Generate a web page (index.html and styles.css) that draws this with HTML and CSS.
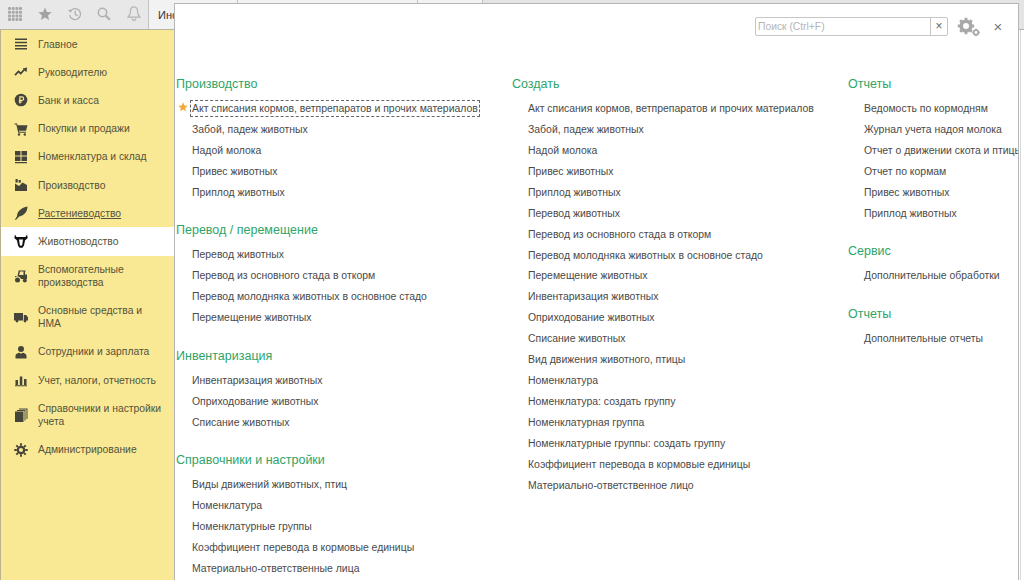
FILE: index.html
```html
<!DOCTYPE html>
<html lang="ru">
<head>
  <meta charset="UTF-8">
  <title>Животноводство</title>
  <link rel="stylesheet" href="styles.css">
</head>
<body>

<div class="topbar">
  <div class="tools">
    <svg class="tool" width="14" height="14" viewBox="0 0 14 14"><g fill="#a9a9a9"><rect x="0" y="0" width="3" height="3" rx="1"/><rect x="3.7" y="0" width="3" height="3" rx="1"/><rect x="7.4" y="0" width="3" height="3" rx="1"/><rect x="11" y="0" width="3" height="3" rx="1"/><rect x="0" y="3.7" width="3" height="3" rx="1"/><rect x="3.7" y="3.7" width="3" height="3" rx="1"/><rect x="7.4" y="3.7" width="3" height="3" rx="1"/><rect x="11" y="3.7" width="3" height="3" rx="1"/><rect x="0" y="7.4" width="3" height="3" rx="1"/><rect x="3.7" y="7.4" width="3" height="3" rx="1"/><rect x="7.4" y="7.4" width="3" height="3" rx="1"/><rect x="11" y="7.4" width="3" height="3" rx="1"/><rect x="0" y="11" width="3" height="3" rx="1"/><rect x="3.7" y="11" width="3" height="3" rx="1"/><rect x="7.4" y="11" width="3" height="3" rx="1"/><rect x="11" y="11" width="3" height="3" rx="1"/></g></svg>
    <svg class="tool" width="14" height="14" viewBox="0 0 14 14"><path d="M7 .5l1.900 4.400 4.700.4-3.600 3.100 1.100 4.600L7 10.600 2.900 13 4 8.400.4 5.300l4.700-.4z" fill="#a2a2a2"/></svg>
    <svg class="tool" width="14" height="14" viewBox="0 0 14 14"><path d="M2.300 4.200A5.500 5.500 0 1 1 1.600 8M7.200 3.800v3.600l2.500 1.500" fill="none" stroke="#b0b0b0" stroke-width="1.300"/><path d="M0 3.200l3.600-.7-.6 3.600z" fill="#b0b0b0"/></svg>
    <svg class="tool" width="14" height="14" viewBox="0 0 14 14"><circle cx="5.500" cy="5.500" r="4.200" fill="none" stroke="#b0b0b0" stroke-width="1.500"/><path d="M8.700 8.700l4.300 4" stroke="#b0b0b0" stroke-width="2.200"/></svg>
    <svg class="tool" width="14" height="15" viewBox="0 0 14 15"><path d="M7 .8c-2.400 0-3.500 2-3.500 4.200 0 3-1 4.600-2.500 6.200h12c-1.500-1.600-2.500-3.200-2.500-6.200C10.500 2.800 9.400.8 7 .8zM5 12.500c.3 1.200 1.100 1.800 2 1.800s1.700-.6 2-1.800" fill="none" stroke="#b4b4b4" stroke-width="1.200"/></svg>
  </div>
  <div class="tab">Инструменты</div>
  <div class="tab tab-wide"></div>
  <div class="tab tab-small"></div>
  <div class="tab tab-rest"></div>
</div>

<div class="main">
  <nav class="sidebar">
    <a class="nav-item"><svg class="ico" viewBox="0 0 14 14"><path d="M1 1.500h12v1.500H1zM1 4.700h12v1.500H1zM1 7.900h12v1.500H1zM1 11.100h12v1.500H1z"/></svg><span>Главное</span></a>
    <a class="nav-item"><svg class="ico" viewBox="0 0 14 14"><path d="M1 10.200l3.500-3.700 2.300 2 3.600-4" fill="none" stroke="#45453a" stroke-width="1.800"/><path d="M8.600 3.400l4.600-.8-.8 4.600z"/></svg><span>Руководителю</span></a>
    <a class="nav-item"><svg class="ico" viewBox="0 0 14 14"><circle cx="7" cy="7" r="6.300"/><path d="M5.900 10.600V3.900h2a1.700 1.700 0 0 1 0 3.500h-3M4.800 9h3.200" fill="none" stroke="#f9e996" stroke-width="1.200"/></svg><span>Банк и касса</span></a>
    <a class="nav-item"><svg class="ico" viewBox="0 0 14 14"><path d="M.5 1.500h2.600l.5 1.700h9.900l-1.500 5.500H4.900l.3 1H12v1H4.200L2.300 2.500H.5z"/><circle cx="5" cy="12.500" r="1.200"/><circle cx="10.800" cy="12.500" r="1.200"/></svg><span>Покупки и продажи</span></a>
    <a class="nav-item"><svg class="ico" viewBox="0 0 14 14"><path d="M1 1h5.500v4.500H1zM7.500 1H13v4.500H7.500zM1 6.500h5.500V11H1zM7.500 6.500H13V11H7.500zM1 12h12v1.200H1z"/></svg><span>Номенклатура и склад</span></a>
    <a class="nav-item"><svg class="ico" viewBox="0 0 14 14"><path d="M1 13V5.500l4 2.500 3.500-3.500 4.500 2.500V13zM1.500 1h2.200v3.500H1.500zM4.600 2h2.200v2.700H4.600z"/></svg><span>Производство</span></a>
    <a class="nav-item hovered"><svg class="ico" viewBox="0 0 14 14"><path d="M1 13.500l2-3.300C3 5.500 7.500 1.500 13.500.5c0 5-3.300 9.300-8.300 10L1.800 14z"/></svg><span>Растениеводство</span></a>
    <a class="nav-item active"><svg class="ico" viewBox="0 0 14 14"><path fill-rule="evenodd" d="M1 .5L2.500 3h9L13 .5l.7 3.500L11 6.500l-1 5L8.500 13.800h-3L4 11.500l-1-5L.3 4zM5 5.500l.8 5.500L7 12l1.200-1 .8-5.500z" fill="#111"/></svg><span>Животноводство</span></a>
    <a class="nav-item two-line"><svg class="ico" viewBox="0 0 14 14"><path fill-rule="evenodd" d="M4.500 1.500h7v1H11v3h2v4.500H7a3.500 3.500 0 0 0-6-1.500V7h2.500l1-4.500zM6 2.500L5.200 6H9.500V2.500z"/><circle cx="3.500" cy="11" r="2.500"/><circle cx="10.800" cy="11.500" r="2"/></svg><span>Вспомогательные производства</span></a>
    <a class="nav-item two-line"><svg class="ico" viewBox="0 0 14 14"><path d="M0 3h9v7.500H0zM9.800 5h2.500L14 7.500v3H9.800z"/><circle cx="3" cy="11" r="1.400"/><circle cx="11" cy="11" r="1.400"/></svg><span>Основные средства и НМА</span></a>
    <a class="nav-item"><svg class="ico" viewBox="0 0 14 14"><circle cx="7" cy="4" r="3"/><path d="M1.500 13.500v-2.800c0-1.800 2.300-2.700 3.800-3l1.700 1 1.700-1c1.500.3 3.800 1.200 3.800 3v2.800z"/></svg><span>Сотрудники и зарплата</span></a>
    <a class="nav-item"><svg class="ico" viewBox="0 0 14 14"><path d="M1.500 7H4v5H1.500zM5.800 3.500h2.500V12H5.800zM10 6h2.500v6H10zM1 12.300h12v1H1z"/></svg><span>Учет, налоги, отчетность</span></a>
    <a class="nav-item two-line"><svg class="ico" viewBox="0 0 14 14"><path d="M1 3.500h8.500V14H1zM3 2h8.500v10.500h-1V3H3zM5 .5h8.500V11h-1V1.500H5z"/></svg><span>Справочники и настройки учета</span></a>
    <a class="nav-item"><svg class="ico" viewBox="0 0 14 14"><path d="M7 3.800A3.200 3.200 0 1 0 7 10.200 3.200 3.200 0 0 0 7 3.800z" fill="none" stroke="#45453a" stroke-width="2.200"/><path d="M7 .3v2.500M7 11.200v2.500M.3 7h2.500M11.200 7h2.500M2.300 2.300L4 4M10 10l1.700 1.700M2.300 11.700L4 10M10 4l1.700-1.700" stroke="#45453a" stroke-width="1.900"/></svg><span>Администрирование</span></a>
  </nav>
</div>

<div class="edge"></div>

<section class="panel">
  <header class="panel-head">
    <div class="search">
      <span class="search-text">Поиск (Ctrl+F)</span>
      <span class="search-clear">×</span>
    </div>
    <svg class="gear" width="24" height="20" viewBox="0 0 24 20"><g fill="none" stroke="#a8a8a8"><circle cx="9" cy="9" r="4.800" stroke-width="3.600"/><path d="M9 .8v3M9 14.200v3M.8 9h3M14.200 9h3M3.200 3.200l2 2M12.800 12.800l2 2M3.200 14.800l2-2M12.800 5.200l2-2" stroke-width="2.800"/><circle cx="19" cy="15.500" r="2.300" stroke-width="1.800"/><path d="M19 11.800v1.400M19 17.800v1.400M15.300 15.500h1.400M21.300 15.500h1.400" stroke-width="1.400"/></g></svg>
    <span class="close">×</span>
  </header>

  <div class="columns">
    <div class="column">
      <div class="group">
        <h3>Производство</h3>
        <a class="link focused"><svg class="star" width="10" height="10" viewBox="0 0 14 14"><path d="M7 .5l1.900 4.400 4.700.4-3.600 3.100 1.100 4.600L7 10.600 2.900 13 4 8.400.4 5.300l4.700-.4z" fill="#f0a93a"/></svg><span>Акт списания кормов, ветпрепаратов и прочих материалов</span></a>
        <a class="link"><span>Забой, падеж животных</span></a>
        <a class="link"><span>Надой молока</span></a>
        <a class="link"><span>Привес животных</span></a>
        <a class="link"><span>Приплод животных</span></a>
      </div>
      <div class="group">
        <h3>Перевод / перемещение</h3>
        <a class="link"><span>Перевод животных</span></a>
        <a class="link"><span>Перевод из основного стада в откорм</span></a>
        <a class="link"><span>Перевод молодняка животных в основное стадо</span></a>
        <a class="link"><span>Перемещение животных</span></a>
      </div>
      <div class="group">
        <h3>Инвентаризация</h3>
        <a class="link"><span>Инвентаризация животных</span></a>
        <a class="link"><span>Оприходование животных</span></a>
        <a class="link"><span>Списание животных</span></a>
      </div>
      <div class="group">
        <h3>Справочники и настройки</h3>
        <a class="link"><span>Виды движений животных, птиц</span></a>
        <a class="link"><span>Номенклатура</span></a>
        <a class="link"><span>Номенклатурные группы</span></a>
        <a class="link"><span>Коэффициент перевода в кормовые единицы</span></a>
        <a class="link"><span>Материально-ответственные лица</span></a>
      </div>
    </div>

    <div class="column">
      <div class="group">
        <h3>Создать</h3>
        <a class="link"><span>Акт списания кормов, ветпрепаратов и прочих материалов</span></a>
        <a class="link"><span>Забой, падеж животных</span></a>
        <a class="link"><span>Надой молока</span></a>
        <a class="link"><span>Привес животных</span></a>
        <a class="link"><span>Приплод животных</span></a>
        <a class="link"><span>Перевод животных</span></a>
        <a class="link"><span>Перевод из основного стада в откорм</span></a>
        <a class="link"><span>Перевод молодняка животных в основное стадо</span></a>
        <a class="link"><span>Перемещение животных</span></a>
        <a class="link"><span>Инвентаризация животных</span></a>
        <a class="link"><span>Оприходование животных</span></a>
        <a class="link"><span>Списание животных</span></a>
        <a class="link"><span>Вид движения животного, птицы</span></a>
        <a class="link"><span>Номенклатура</span></a>
        <a class="link"><span>Номенклатура: создать группу</span></a>
        <a class="link"><span>Номенклатурная группа</span></a>
        <a class="link"><span>Номенклатурные группы: создать группу</span></a>
        <a class="link"><span>Коэффициент перевода в кормовые единицы</span></a>
        <a class="link"><span>Материально-ответственное лицо</span></a>
      </div>
    </div>

    <div class="column">
      <div class="group">
        <h3>Отчеты</h3>
        <a class="link"><span>Ведомость по кормодням</span></a>
        <a class="link"><span>Журнал учета надоя молока</span></a>
        <a class="link"><span>Отчет о движении скота и птицы</span></a>
        <a class="link"><span>Отчет по кормам</span></a>
        <a class="link"><span>Привес животных</span></a>
        <a class="link"><span>Приплод животных</span></a>
      </div>
      <div class="group">
        <h3>Сервис</h3>
        <a class="link"><span>Дополнительные обработки</span></a>
      </div>
      <div class="group">
        <h3>Отчеты</h3>
        <a class="link"><span>Дополнительные отчеты</span></a>
      </div>
    </div>
  </div>
</section>

</body>
</html>
```

FILE: styles.css
```css
* {
  box-sizing: border-box;
}

html, body {
  height: 100%;
}

body {
  margin: 0;
  font-family: "Liberation Sans", Arial, sans-serif;
  overflow: hidden;
  background-color: #fff;
  display: flex;
  flex-direction: column;
}

.topbar {
  display: flex;
  height: 30px;
  flex-shrink: 0;
  background-color: #e8e8e8;
  border-bottom: 1px solid #b4b4a4;
}

.tools {
  display: flex;
  align-items: center;
  width: 149px;
  padding: 0 0 2px 8px;
  gap: 15.800px;
  border-right: 1px solid #c4c4c4;
}

.tool {
  flex-shrink: 0;
}

.tab {
  width: 89px;
  padding: 9px 0 0 9px;
  font-size: 11px;
  color: #333;
  background-color: #f2f2f2;
  border-right: 1px solid #c4c4c4;
  white-space: nowrap;
  overflow: hidden;
}

.tab-wide {
  width: 180px;
}

.tab-small {
  width: 65px;
}

.tab-rest {
  flex: 1;
  border-right: 0;
  background-color: #e4e4e4;
}

.main {
  flex: 1;
  display: flex;
  min-height: 0;
}

.sidebar {
  width: 175px;
  background-color: #f9e995;
  border-left: 1px solid #b9b28a;
  border-right: 1px solid #b9b28a;
}

.nav-item {
  display: flex;
  align-items: center;
  height: 28.200px;
  padding: 0 8px 0 13px;
  font-size: 10.350px;
  line-height: 13px;
  color: #54523a;
}

.nav-item.two-line {
  height: 41.200px;
}

.nav-item.hovered span {
  text-decoration: underline;
}

.nav-item.active {
  background-color: #fff;
  margin-right: -1px;
}

.ico {
  width: 14px;
  height: 14px;
  flex-shrink: 0;
  margin-right: 10px;
  fill: #45453a;
}

/* la fenetre ouverte par-dessus la section */
.panel {
  position: absolute;
  top: 3px;
  left: 174px;
  width: 845px;
  bottom: 0;
  background-color: #fff;
  border: 1px solid #b5b5b5;
  border-bottom: 0;
  overflow: hidden;
}

.edge {
  position: absolute;
  top: 30px;
  right: 0;
  width: 4px;
  bottom: 0;
  background-color: #fff;
  border-left: 1px solid #d8d8d8;
}

.panel-head {
  display: flex;
  align-items: center;
  justify-content: flex-end;
  height: 65px;
  padding: 0 13px 20px 0;
}

.search {
  display: flex;
  width: 193px;
  height: 19px;
  border: 1px solid #c6c6c6;
  border-radius: 2px;
  font-size: 10.300px;
  line-height: 17px;
}

.search-text {
  flex: 1;
  padding-left: 2px;
  color: #b5b5b5;
}

.search-clear {
  width: 17px;
  text-align: center;
  font-size: 12px;
  color: #666;
  border-left: 1px solid #c6c6c6;
}

.gear {
  margin-left: 9px;
  flex-shrink: 0;
}

.close {
  width: 14px;
  margin-left: 10px;
  text-align: center;
  font-size: 15px;
  color: #777;
}

.columns {
  display: flex;
}

.column {
  flex: 0 0 336px;
  min-width: 336px;
}

.group {
  margin-bottom: 12.700px;
}

h3 {
  margin: 0;
  height: 29px;
  padding-left: 1px;
  font-size: 12.500px;
  font-weight: normal;
  line-height: 31px;
  color: #2fa468;
}

.link {
  display: flex;
  align-items: center;
  position: relative;
  height: 20.950px;
  padding-left: 17px;
  font-size: 10.450px;
  color: #4a4a4a;
  white-space: nowrap;
}

.link.focused span {
  padding: 2px 1px;
  margin-left: -1px;
  outline: 1px dashed #666;
}

.star {
  position: absolute;
  left: 3px;
  top: 4px;
}
```
